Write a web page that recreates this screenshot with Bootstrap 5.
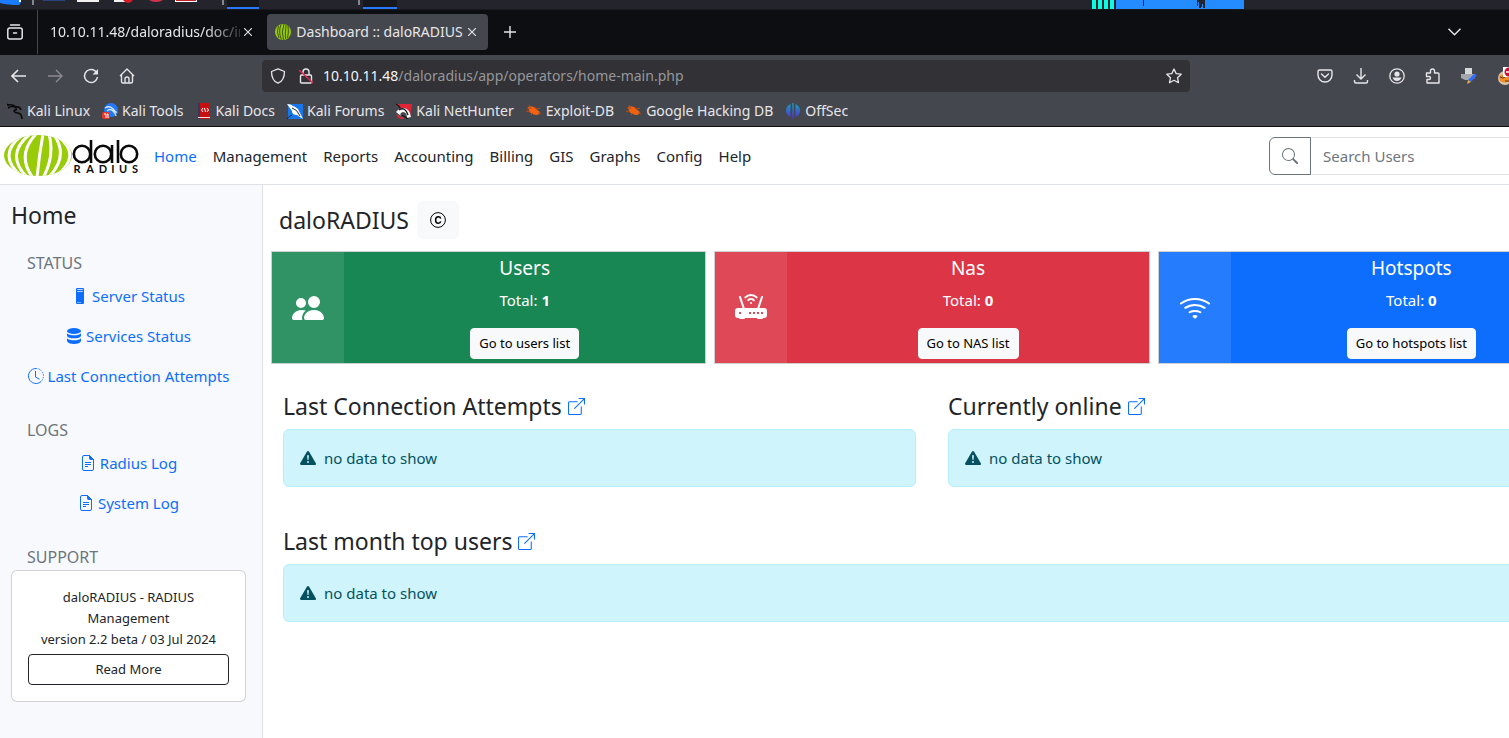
<!DOCTYPE html>
<html lang="en">
<head>
<meta charset="utf-8">
<meta name="viewport" content="width=device-width, initial-scale=1">
<title>Dashboard :: daloRADIUS</title>
<link href="https://cdn.jsdelivr.net/npm/bootstrap@5.3.0/dist/css/bootstrap.min.css" rel="stylesheet">
<style>
body{font-family:"Noto Sans",sans-serif;font-size:15px;line-height:24px;overflow:hidden;color:#212529;background:#fff}
a{text-decoration:none}
h1,h2,h3{margin:0}
svg{flex:none}
/* desktop panel */
.desk{height:10px;background:#23242c;border-bottom:1px solid #191a20;overflow:hidden}
.desk-graph{margin-right:265px}
/* browser chrome */
.chrome{font-size:14px;color:#e6e6ea}
.chrome button{background:none;border:0;padding:0;color:inherit;display:flex}
.tabstrip{height:45px;background:#0d0e12;padding-bottom:1px}
.tab-list-btn{width:38px;height:44px;border-right:1px solid #45464d!important;align-items:center;padding-left:7px!important}
.btab{height:36px;border-radius:4px}
.btab-idle{width:229px;padding-left:12px}
.btab-idle a{width:190px;overflow:hidden;white-space:nowrap;color:inherit;-webkit-mask-image:linear-gradient(90deg,#000 82%,transparent 104%);mask-image:linear-gradient(90deg,#000 82%,transparent 104%)}
.btab-on{width:221px;background:#45474e;padding:0 12px 0 8px}
.btab-on a{color:inherit;white-space:nowrap}
.toolbar{background:#45474e;height:41px}
.tool-left{padding-left:11px;gap:20px}
.urlbox{width:928px;height:32px;background:#313136;border-radius:4px;padding:0 8px;margin-left:127px}
.urltext{color:#96979b}
.urltext b{color:#f4f4f6;font-weight:400}
.bookmarks{background:#45474e;height:31px;border-bottom:1px solid #0d0e12;padding-left:7px;gap:12px}
.bookmarks a{color:#e6e6ea;display:flex;align-items:center;gap:4px;white-space:nowrap}
/* page */
.site{width:106.1%}
.site-nav{height:58px;border-bottom:1px solid #dee2e6}
.site-nav .nav-link{color:#212529;padding:8px}
.site-nav .nav-link.active{color:#0d6efd}
.search-group{width:328px}
.search-group .form-control{font-size:15px;line-height:24px}
.search-group ::placeholder{color:#6c757d}
.side{width:263px;background:#f8f9fc;border-right:1px solid #dee2e6;padding:16px 16px 0 11px;min-height:560px}
.side-title{margin-bottom:21px}
.head-lg{font-size:23px;line-height:29px;font-weight:400}
.head-lg svg{vertical-align:baseline}
.side-cap{font-size:16px;line-height:24px;font-weight:400;color:#6c757d;padding-left:16px;margin-bottom:1px}
.side-links{margin-bottom:22px}
.side-links a{display:flex;justify-content:center;align-items:center;height:40px;gap:4px;color:#0d6efd}
.small-text{font-size:13px;line-height:21px}
.small-btn{font-size:13px;line-height:21px;padding:4px 8px}
.stat-card{border-radius:0;color:#fff;border-color:#ced0d2}
.stat-icon{width:72px;background:rgba(255,255,255,.1)}
.stat-card h2{font-size:19px;line-height:24px;font-weight:400;margin-bottom:8px}
.info-box{background:#cff4fc;border:1px solid #b6effb;color:#055160;border-radius:6px;padding:16px}
</style>
</head>
<body>
<header class="chrome">
  <div class="desk d-flex justify-content-between">
    <svg width="400" height="9" viewBox="0 0 400 9"><path d="M0 0h21q0 4-2 5Q8 5 0 3z" fill="#1c7cff"/><path d="M20 0v2" stroke="#fff" stroke-width="2"/><path d="M33 0v5M223 0v5M359 0v5" stroke="#86878c" stroke-width="2"/><path d="M43 0h22v1H43z" fill="#28427e"/><path d="M77 0h22v2H77zM114 0h10l2 2h-12z" fill="#f2f2f2"/><path d="M123 0h10q-2 3-5 3t-5-3z" fill="#d81c24"/><path d="M149 0h14q-3 2-7 2t-7-2z" fill="#d8324b"/><path d="M175 0h22v2h-22z" fill="#fff"/><path d="M176 0h20v1h-20z" fill="#c4222a"/><path d="M227 0h32v7h-32zM363 0h34v7h-34z" fill="#17181e"/><path d="M227 7h32v2h-32zM363 7h34v2h-34z" fill="#2777ff"/></svg>
    <svg class="desk-graph" width="152" height="9" viewBox="0 0 152 9"><path d="M0 0h4v9H0zM6 0h4v9H6zM12 0h4v9h-4zM18 0h4v9h-4z" fill="#0ffae0"/><path d="M24 0h128v9H24z" fill="#258cff"/><path d="M51 0h1v6h-1zM105 0h8v8h-2V4h-1v3h-1v1h-2V2h-1v4h-1z" fill="#23242c"/></svg>
  </div>
  <div class="tabstrip d-flex align-items-center">
    <button class="tab-list-btn" aria-label="Recent tabs"><svg width="16" height="16" viewBox="0 0 16 16" fill="none" stroke="currentColor" stroke-width="1.5" stroke-linecap="round"><path d="M3.5 1h9"/><rect x=".8" y="4" width="14.4" height="11" rx="2"/><path d="M6.5 9h3"/></svg></button>
    <div class="btab btab-idle d-flex align-items-center gap-1"><a href="#">10.10.11.48/daloradius/doc/in</a><button aria-label="Close tab"><svg width="8" height="8" viewBox="0 0 8 8" stroke="currentColor" stroke-width="1.1"><path d="M0 0l8 8M8 0L0 8"/></svg></button></div>
    <div class="btab btab-on d-flex align-items-center justify-content-between">
      <svg width="16" height="16" viewBox="0 0 16 16"><circle cx="8" cy="8" r="8" fill="#97c90b"/><path d="M3.5 2Q1 8 4 14M6 .5Q3 8 6.500 15.500M9 0Q6 8 8.500 16M11 1Q10 8 10.500 15M13 2q1 6-.5 12" fill="none" stroke="#3e5410"/></svg>
      <a href="#">Dashboard :: daloRADIUS</a><button aria-label="Close tab"><svg width="8" height="8" viewBox="0 0 8 8" stroke="currentColor" stroke-width="1.1"><path d="M0 0l8 8M8 0L0 8"/></svg></button></div>
    <button class="ms-3" aria-label="New tab"><svg width="12" height="12" viewBox="0 0 12 12" stroke="currentColor" stroke-width="1.4"><path d="M6 0v12M0 6h12"/></svg></button>
    <button class="ms-auto me-5" aria-label="List all tabs"><svg width="13" height="8" viewBox="0 0 13 8" fill="none" stroke="currentColor" stroke-width="1.4"><path d="M.5.8l6 6 6-6"/></svg></button>
  </div>
  <div class="toolbar d-flex align-items-center">
    <div class="tool-left d-flex align-items-center">
      <button aria-label="Back"><svg width="16" height="16" viewBox="0 0 16 16" fill="none" stroke="currentColor" stroke-width="1.6"><path d="M15 8H1M7 2L1 8l6 6"/></svg></button>
      <button aria-label="Forward" disabled><svg width="16" height="16" viewBox="0 0 16 16" fill="none" stroke="#8a8b90" stroke-width="1.4"><path d="M1 8h14M9 2l6 6-6 6"/></svg></button>
      <button aria-label="Reload"><svg width="16" height="16" viewBox="0 0 16 16" fill="none" stroke="currentColor" stroke-width="1.5"><path d="M14.500 9A6.500 6.500 0 1 1 12 2.800L14 5"/><path d="M15 1v5.500H9.500z" fill="currentColor" stroke="none"/></svg></button>
      <button aria-label="Home"><svg width="16" height="16" viewBox="0 0 16 16" fill="none" stroke="currentColor" stroke-width="1.4" stroke-linejoin="round"><path d="M1 8l7-7 7 7M2.500 7v6.500q0 1.500 1.500 1.500h8q1.500 0 1.500-1.500V7M6 15v-4q0-2 2-2t2 2v4"/></svg></button>
    </div>
    <div class="urlbox d-flex align-items-center">
      <svg width="16" height="16" viewBox="0 0 16 16" fill="none" stroke="currentColor" stroke-width="1.300"><path d="M8 .8l6.500 2.700c0 6-2 10-6.500 11.700C3.500 13.500 1.500 9.500 1.500 3.500z" stroke-linejoin="round"/></svg>
      <svg class="ms-2 me-2" width="21" height="16" viewBox="-4 0 21 16" fill="none" stroke="currentColor" stroke-width="1.400"><path d="M5 7V4q0-3 3-3t3 3v3M3.500 7h9q1 0 1 1v6q0 1-1 1h-9q-1 0-1-1V8q0-1 1-1z"/><path d="M1 2l14 13" stroke="#e22850" stroke-width="1.500"/></svg>
      <span class="urltext flex-grow-1"><b>10.10.11.48</b>/daloradius/app/operators/home-main.php</span>
      <button aria-label="Bookmark this page"><svg width="16" height="16" viewBox="0 0 16 16" fill="none" stroke="currentColor" stroke-width="1.300" stroke-linejoin="round"><path d="M8 1l2.200 4.600 5 .6-3.700 3.500 1 5L8 12.300 3.500 14.700l1-5L.8 6.200l5-.6z"/></svg></button>
    </div>
    <div class="d-flex align-items-center ms-auto" style="gap:20px">
      <button aria-label="Save to Pocket"><svg width="16" height="16" viewBox="0 0 16 16" fill="none" stroke="currentColor" stroke-width="1.400" stroke-linecap="round"><path d="M2.500 2h11q1.500 0 1.500 1.500V7a7 7 0 0 1-14 0V3.500Q1 2 2.500 2zM4.500 6L8 9.200 11.500 6"/></svg></button>
      <button aria-label="Downloads"><svg width="16" height="16" viewBox="0 0 16 16" fill="none" stroke="currentColor" stroke-width="1.400"><path d="M8 0v11M3.500 6.500L8 11l4.500-4.500M1.500 12v1.500Q1.500 15 3 15h10q1.500 0 1.500-1.500V12"/></svg></button>
      <button aria-label="Account"><svg width="16" height="16" viewBox="0 0 16 16"><circle cx="8" cy="8" r="7.200" fill="none" stroke="currentColor" stroke-width="1.300"/><circle cx="8" cy="6" r="2.600" fill="currentColor"/><path d="M3.500 9.500h9Q11 13 8 13T3.500 9.500z" fill="currentColor"/></svg></button>
      <button aria-label="Extensions"><svg width="16" height="16" viewBox="0 0 16 16" fill="none" stroke="currentColor" stroke-width="1.400" stroke-linejoin="round"><path d="M1.500 5h4V3q0-2 2-2t2 2v2H13q1 0 1 1v9H2v-3.500h2q1.500 0 1.500-1.500T4 8.500H1.500z"/></svg></button>
      <button aria-label="Proxy extension"><svg width="16" height="16" viewBox="0 0 16 16"><path d="M4 0h7v6H4z" fill="#d6d7d9"/><path d="M0 6h14v4l-4 2H4L0 10z" fill="#a3a6aa"/><path d="M7 12l6-6 3 1-6 7z" fill="#2f6bff"/><path d="M7 12l3 2-4 2z" fill="#e5b23b"/></svg></button>
      <div class="overflow-hidden d-flex" style="width:12px"><button aria-label="Blocker extension"><svg width="20" height="18" viewBox="0 0 20 18"><circle cx="8" cy="11" r="7" fill="#d9c5ac"/><path d="M2 9q6-4 12 0v5q-6 3-11 0z" fill="#f28d28"/><path d="M3 10l3 1 2-1M8 14h4" stroke="#57341c" fill="none"/><rect x="6" y="0" width="14" height="10" fill="#fff"/><circle cx="12" cy="5" r="4.500" fill="#cb1233"/><path d="M9 5h6" stroke="#fff" stroke-width="1.500"/></svg></button></div>
    </div>
  </div>
  <nav class="bookmarks d-flex align-items-center" aria-label="Bookmarks">
    <a href="#"><svg width="16" height="16" viewBox="0 0 16 16" fill="none" stroke="#0b0b0c" stroke-width="1.600"><path d="M0 2q6-1 9 2M1 5q5-3 8 0 1 3-2 2M8 4q5-1 6 3M7 7q0 3 4 3 4 1 4 6M2 3L0 1"/></svg>Kali Linux</a>
    <a href="#"><svg width="16" height="16" viewBox="0 0 16 16"><circle cx="9" cy="7" r="7" fill="#2278f5"/><path d="M3 5q5-3 8 1t4 3M5 8q3-3 6 0t3 5" fill="none" stroke="#d7e9ff" stroke-width="1.300"/><rect y="9" width="8" height="7" rx="2" fill="#e8362c"/><path d="M2 11h2v4M5 11h1v4" fill="none" stroke="#fff"/></svg>Kali Tools</a>
    <a href="#"><svg width="16" height="16" viewBox="0 0 16 16"><path d="M2 0h12v16H2z" fill="#c8100f"/><path d="M2 0h2v16H2z" fill="#2d3a68"/><path d="M2 14h12v1H2z" fill="#f1dede"/><path d="M7 5L5.500 7 7 9M8.500 5l1 4M11 5l1.500 2L11 9" fill="none" stroke="#fff"/></svg>Kali Docs</a>
    <a href="#"><svg width="16" height="16" viewBox="0 0 16 16"><path d="M1 1h15v15H1z" fill="#1976ea"/><path d="M0 1q4 0 6 2 5 2 6 5l4 8-6-4Q5 12 5 8 2 4 0 1z" fill="#fff"/><path d="M5 5q5 1 8 8M0 16q2-3 5-4" fill="none" stroke="#15243b"/></svg>Kali Forums</a>
    <a href="#"><svg width="16" height="16" viewBox="0 0 16 16"><path d="M1 1h15L14 14z" fill="#df2437"/><path d="M0 9Q3 5 8 5q6 1 7 9l-4 1q0-6-4-6-4 1-2 4z" fill="#f6f6f6"/><path d="M3 7q6-4 9 5M6 12l6 4M0 1q3 1 4 4" fill="none" stroke="#17171a" stroke-width="1.300"/><path d="M1 12q3 4 7 3" fill="none" stroke="#df2437" stroke-width="2"/></svg>Kali NetHunter</a>
    <a href="#"><svg width="16" height="16" viewBox="0 0 16 16"><path d="M2 4q5-2 8 2l4 3-2 3Q5 12 3 8z" fill="#f16310"/><path d="M0 8l4 1M3 2l2 4M8 4l3 2 3-1M5 12l2-2M12 10l3 1M1 5l3 1" stroke="#b94b13" fill="none"/></svg>Exploit-DB</a>
    <a href="#"><svg width="16" height="16" viewBox="0 0 16 16"><path d="M2 4q5-2 8 2l4 3-2 3Q5 12 3 8z" fill="#f16310"/><path d="M0 8l4 1M3 2l2 4M8 4l3 2 3-1M5 12l2-2M12 10l3 1M1 5l3 1" stroke="#b94b13" fill="none"/></svg>Google Hacking DB</a>
    <a href="#"><svg width="16" height="16" viewBox="0 0 16 16"><defs><linearGradient id="os" x2="0" y2="1"><stop stop-color="#10a5bd"/><stop offset="1" stop-color="#5b2bd5"/></linearGradient></defs><path d="M5.500 1v13Q1 12 1 7.500T5.500 1zM7.300 0h1.400v16H7.300zM10.500 1v13q4.500-2 4.500-6.500T10.500 1z" fill="url(#os)"/></svg>OffSec</a>
  </nav>
</header>

<div class="site">
  <nav class="site-nav d-flex align-items-center" aria-label="Main">
    <a href="#" class="d-flex ms-1" aria-label="daloRADIUS">
      <svg width="142" height="44" viewBox="2 0 142 44"><defs><clipPath id="globe"><ellipse cx="36" cy="21.500" rx="34" ry="20.500"/></clipPath></defs><g clip-path="url(#globe)"><path d="M0 0h72v43H0z" fill="#98cc08"/><g fill="none" stroke="#fff" stroke-width="3"><path d="M19 2Q-5 21 19 42M28 0Q2 21 26 44M34 0Q14 21 31 44M41 0Q37 22 35 44M47 0Q53 22 41 44M52 1Q67 22 47 43M57 3Q80 22 54 42"/></g></g><g fill="none" stroke="#0a0a0a" stroke-width="2.600"><circle cx="80" cy="20" r="8.200"/><path d="M89 6v23"/><circle cx="101" cy="20" r="8.200"/><path d="M110 11v18M116 6v23"/><circle cx="127" cy="20" r="8.200"/></g><g font-family="Lato,sans-serif" font-weight="700" font-size="11" fill="#0a0a0a" text-anchor="middle"><text x="75" y="39">R</text><text x="88" y="39">A</text><text x="101" y="39">D</text><text x="111" y="39">I</text><text x="121" y="39">U</text><text x="133" y="39">S</text></g></svg>
    </a>
    <ul class="nav flex-nowrap">
      <li><a class="nav-link active" href="#">Home</a></li><li><a class="nav-link" href="#">Management</a></li><li><a class="nav-link" href="#">Reports</a></li><li><a class="nav-link" href="#">Accounting</a></li><li><a class="nav-link" href="#">Billing</a></li><li><a class="nav-link" href="#">GIS</a></li><li><a class="nav-link" href="#">Graphs</a></li><li><a class="nav-link" href="#">Config</a></li><li><a class="nav-link" href="#">Help</a></li>
    </ul>
    <form class="input-group search-group ms-auto me-1">
      <button type="button" class="btn btn-outline-secondary d-flex align-items-center" aria-label="Search"><svg width="16" height="16" viewBox="0 0 16 16" fill="currentColor"><path d="M11.742 10.344a6.500 6.500 0 1 0-1.397 1.398h-.001c.03.04.062.078.098.115l3.850 3.850a1 1 0 0 0 1.415-1.414l-3.850-3.850a1.007 1.007 0 0 0-.115-.1zM12 6.500a5.500 5.500 0 1 1-11 0 5.500 5.500 0 0 1 11 0z"/></svg></button>
      <input class="form-control" type="text" placeholder="Search Users" aria-label="Search Users">
    </form>
  </nav>
  <div class="d-flex">
    <aside class="side flex-shrink-0">
      <h1 class="head-lg side-title">Home</h1>
      <h2 class="side-cap">STATUS</h2>
      <nav class="side-links" aria-label="Status">
        <a href="#"><svg width="16" height="16" viewBox="0 0 16 16" fill="currentColor"><path fill-rule="evenodd" d="M5 0a1 1 0 0 0-1 1v14a1 1 0 0 0 1 1h6a1 1 0 0 0 1-1V1a1 1 0 0 0-1-1zm.2 1.200h5.600v.8H5.200zm0 2h5.600v.8H5.200zM5.500 14h1v1h-1zm2 0h1v1h-1z"/></svg>Server Status</a>
        <a href="#"><svg width="16" height="16" viewBox="0 0 16 16" fill="currentColor"><ellipse cx="8" cy="3" rx="7" ry="3"/><path d="M1 5.200q2 2 7 2t7-2V8q-1 2.300-7 2.300T1 8zM1 10.200q2 2 7 2t7-2V13q-1 3-7 3t-7-3z"/></svg>Services Status</a>
        <a href="#"><svg width="16" height="16" viewBox="0 0 16 16" fill="none" stroke="currentColor"><path d="M8 .5a7.500 7.500 0 1 0 5.300 12.800"/><path d="M8 .5a7.500 7.500 0 0 1 5.300 12.800" stroke-dasharray="1.300 1.200"/><path d="M7.500 3v6l4 2.200"/></svg>Last Connection Attempts</a>
      </nav>
      <h2 class="side-cap">LOGS</h2>
      <nav class="side-links" aria-label="Logs">
        <a href="#"><svg width="16" height="16" viewBox="0 0 16 16" fill="none" stroke="currentColor"><path d="M9.500.5H4A1.500 1.500 0 0 0 2.500 2v12A1.500 1.500 0 0 0 4 15.500h8a1.500 1.500 0 0 0 1.500-1.500V4.500zM5 7.500h6M5 9.500h6M5 11.500h3"/><path d="M9.500.5v3a1 1 0 0 0 1 1h3z" fill="currentColor"/></svg>Radius Log</a>
        <a href="#"><svg width="16" height="16" viewBox="0 0 16 16" fill="none" stroke="currentColor"><path d="M9.500.5H4A1.500 1.500 0 0 0 2.500 2v12A1.500 1.500 0 0 0 4 15.500h8a1.500 1.500 0 0 0 1.500-1.500V4.500zM5 7.500h6M5 9.500h6M5 11.500h3"/><path d="M9.500.5v3a1 1 0 0 0 1 1h3z" fill="currentColor"/></svg>System Log</a>
      </nav>
      <h2 class="side-cap">SUPPORT</h2>
      <div class="card"><div class="card-body text-center small-text">daloRADIUS - RADIUS Management<br>version 2.2 beta / 03 Jul 2024
        <button class="btn btn-outline-dark small-btn rounded-1 w-100 d-block mt-1">Read More</button></div></div>
    </aside>
    <main class="flex-grow-1 px-3 pt-3">
      <div class="d-flex align-items-center gap-2 mb-2 pb-1">
        <h1 class="head-lg">daloRADIUS</h1>
        <button class="btn btn-light d-flex align-items-center" style="height:38px" aria-label="Copyright"><svg width="16" height="16" viewBox="0 0 16 16" fill="none" stroke="currentColor"><circle cx="8" cy="8" r="7.400"/><path d="M10.700 6.600Q10.300 4.700 8.300 4.700 5.600 4.700 5.600 8t2.700 3.300q2 0 2.400-1.900" stroke-width="1.500"/></svg></button>
      </div>
      <div class="row">
        <div class="col-4 px-1"><section class="card stat-card bg-success flex-row">
          <div class="stat-icon d-flex align-items-center justify-content-center"><svg width="32" height="32" viewBox="0 0 16 16" fill="#fff"><path d="M7 14s-1 0-1-1 1-4 5-4 5 3 5 4-1 1-1 1zm4-6a3 3 0 1 0 0-6 3 3 0 0 0 0 6z"/><path d="M5.216 14A2.238 2.238 0 0 1 5 13c0-1.355.68-2.750 1.936-3.720A6.325 6.325 0 0 0 5 9c-4 0-5 3-5 4s1 1 1 1zM4.500 8a2.500 2.500 0 1 0 0-5 2.500 2.500 0 0 0 0 5z"/></svg></div>
          <div class="flex-grow-1 text-center p-1"><h2>Users</h2><p>Total: <strong>1</strong></p><button class="btn btn-light small-btn rounded-1">Go to users list</button></div></section></div>
        <div class="col-4 px-1"><section class="card stat-card bg-danger flex-row">
          <div class="stat-icon d-flex align-items-center justify-content-center"><svg width="32" height="32" viewBox="0 0 16 16" fill="#fff"><path d="M5.525 3.025a3.500 3.500 0 0 1 4.950 0 .5.5 0 1 0 .707-.707 4.500 4.500 0 0 0-6.364 0 .5.5 0 0 0 .707.707z"/><path d="M6.940 4.440a1.500 1.500 0 0 1 2.120 0 .5.5 0 0 0 .708-.708 2.500 2.500 0 0 0-3.536 0 .5.5 0 0 0 .707.707z"/><circle cx="8" cy="5.500" r=".5"/><path fill-rule="evenodd" d="M2.974 2.342a.5.5 0 1 0-.948.316L3.806 8H1.500A1.500 1.500 0 0 0 0 9.500v2A1.500 1.500 0 0 0 1.500 13H2a.5.5 0 0 0 .5.5h2A.5.5 0 0 0 5 13h6a.5.5 0 0 0 .5.5h2a.5.5 0 0 0 .5-.5h.5a1.500 1.500 0 0 0 1.500-1.500v-2A1.500 1.500 0 0 0 14.500 8h-2.306l1.780-5.342a.5.5 0 1 0-.948-.316L11.140 8H4.860zM2 10h1v1H2zm5 0h1v1H7zm2 0h1v1H9zm2 0h1v1h-1zm2 0h1v1h-1z"/></svg></div>
          <div class="flex-grow-1 text-center p-1"><h2>Nas</h2><p>Total: <strong>0</strong></p><button class="btn btn-light small-btn rounded-1">Go to NAS list</button></div></section></div>
        <div class="col-4 px-1"><section class="card stat-card bg-primary flex-row">
          <div class="stat-icon d-flex align-items-center justify-content-center"><svg width="32" height="32" viewBox="0 0 16 16" fill="#fff"><path d="M15.384 6.115a.485.485 0 0 0-.047-.736A12.444 12.444 0 0 0 8 3C5.259 3 2.723 3.882.663 5.379a.485.485 0 0 0-.048.736.518.518 0 0 0 .668.05A11.448 11.448 0 0 1 8 4c2.507 0 4.827.802 6.716 2.164.205.148.490.130.668-.049z"/><path d="M13.229 8.271a.482.482 0 0 0-.063-.745A9.455 9.455 0 0 0 8 6c-1.905 0-3.680.560-5.166 1.526a.480.480 0 0 0-.063.745.525.525 0 0 0 .652.065A8.460 8.460 0 0 1 8 7a8.460 8.460 0 0 1 4.576 1.336c.206.132.480.108.653-.065zm-2.183 2.183c.226-.226.185-.605-.1-.750A6.473 6.473 0 0 0 8 9c-1.060 0-2.062.254-2.946.704-.285.145-.326.524-.1.750l.015.015c.160.160.407.190.611.090A5.478 5.478 0 0 1 8 10c.868 0 1.690.201 2.420.560.203.1.450.070.610-.091zM9.060 12.440c.196-.196.198-.520-.040-.660A1.990 1.990 0 0 0 8 11.500a1.990 1.990 0 0 0-1.020.280c-.238.140-.236.464-.040.660l.706.706a.5.5 0 0 0 .707 0z"/></svg></div>
          <div class="flex-grow-1 text-center p-1"><h2>Hotspots</h2><p>Total: <strong>0</strong></p><button class="btn btn-light small-btn rounded-1">Go to hotspots list</button></div></section></div>
      </div>
      <div class="row pt-1">
        <section class="col-6 px-3 mt-4"><h2 class="head-lg mb-2">Last Connection Attempts <a href="#" aria-label="Open connection attempts"><svg width="17" height="17" viewBox="0 0 16 16" fill="none" stroke="currentColor"><path d="M9 3.500H1.500q-1 0-1 1v10q0 1 1 1h10q1 0 1-1V8M10 .5h5.500V6M15.500.5L6 10"/></svg></a></h2><div class="info-box d-flex align-items-center gap-2 mb-3"><svg width="16" height="16" viewBox="0 0 16 16" fill="currentColor"><path fill-rule="evenodd" d="M8.982 1.566a1.130 1.130 0 0 0-1.960 0L.165 13.233c-.457.778.091 1.767.980 1.767h13.713c.889 0 1.438-.990.980-1.767zM8 5c.535 0 .954.462.900.995l-.350 3.507a.552.552 0 0 1-1.100 0L7.100 5.995A.905.905 0 0 1 8 5zm0 6a1 1 0 1 1 0 2 1 1 0 0 1 0-2z"/></svg>no data to show</div></section>
        <section class="col-6 px-3 mt-4"><h2 class="head-lg mb-2">Currently online <a href="#" aria-label="Open online users"><svg width="17" height="17" viewBox="0 0 16 16" fill="none" stroke="currentColor"><path d="M9 3.500H1.500q-1 0-1 1v10q0 1 1 1h10q1 0 1-1V8M10 .5h5.500V6M15.500.5L6 10"/></svg></a></h2><div class="info-box d-flex align-items-center gap-2 mb-3"><svg width="16" height="16" viewBox="0 0 16 16" fill="currentColor"><path fill-rule="evenodd" d="M8.982 1.566a1.130 1.130 0 0 0-1.960 0L.165 13.233c-.457.778.091 1.767.980 1.767h13.713c.889 0 1.438-.990.980-1.767zM8 5c.535 0 .954.462.900.995l-.350 3.507a.552.552 0 0 1-1.100 0L7.100 5.995A.905.905 0 0 1 8 5zm0 6a1 1 0 1 1 0 2 1 1 0 0 1 0-2z"/></svg>no data to show</div></section>
        <section class="col-12 px-3 mt-4"><h2 class="head-lg mb-2">Last month top users <a href="#" aria-label="Open top users"><svg width="17" height="17" viewBox="0 0 16 16" fill="none" stroke="currentColor"><path d="M9 3.500H1.500q-1 0-1 1v10q0 1 1 1h10q1 0 1-1V8M10 .5h5.500V6M15.500.5L6 10"/></svg></a></h2><div class="info-box d-flex align-items-center gap-2"><svg width="16" height="16" viewBox="0 0 16 16" fill="currentColor"><path fill-rule="evenodd" d="M8.982 1.566a1.130 1.130 0 0 0-1.960 0L.165 13.233c-.457.778.091 1.767.980 1.767h13.713c.889 0 1.438-.990.980-1.767zM8 5c.535 0 .954.462.900.995l-.350 3.507a.552.552 0 0 1-1.100 0L7.100 5.995A.905.905 0 0 1 8 5zm0 6a1 1 0 1 1 0 2 1 1 0 0 1 0-2z"/></svg>no data to show</div></section>
      </div>
    </main>
  </div>
</div>
<script src="https://cdn.jsdelivr.net/npm/bootstrap@5.3.0/dist/js/bootstrap.bundle.min.js"></script>
</body>
</html>
